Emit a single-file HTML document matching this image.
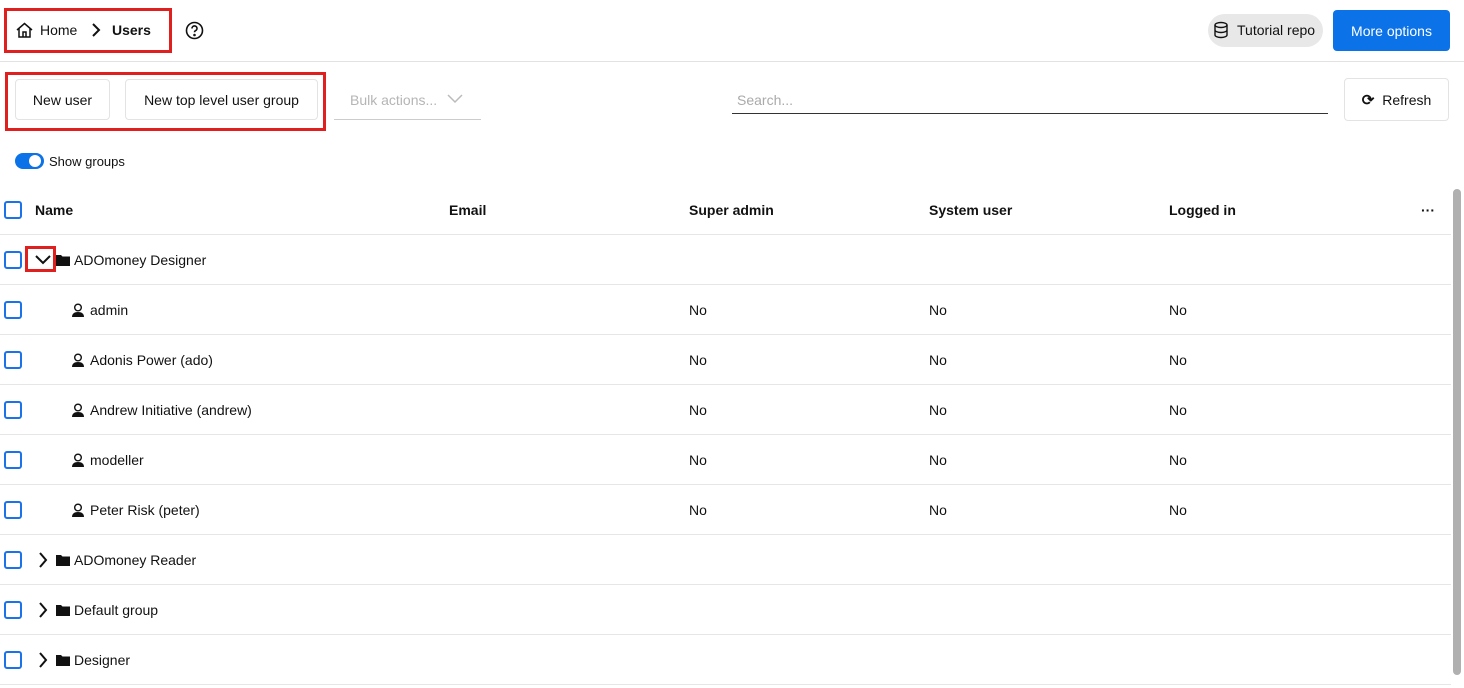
<!DOCTYPE html><html><head><style>
*{box-sizing:border-box;margin:0;padding:0}
body{width:1464px;height:688px;overflow:hidden;background:#fff;font-family:"Liberation Sans",Arial,sans-serif;font-size:14px;color:#111;position:relative}
.a{position:absolute}
.btn{position:absolute;border:1px solid #e3e3e3;border-radius:4px;background:#fff;font-size:14px;display:flex;align-items:center;justify-content:center}
.red{position:absolute;border:3px solid #e0201f}
.cb{position:absolute;left:4px;width:18px;height:18px;border:2px solid #1a73e8;border-radius:3px}
.row{position:absolute;left:0;width:1451px;height:50px;border-bottom:1px solid #e6e6e6}
.t{position:absolute;top:50%;transform:translateY(-50%);white-space:nowrap}
</style></head><body>
<div class="red" style="left:4px;top:8px;width:168px;height:45px"></div>
<svg class="a" style="left:16px;top:22px" width="17" height="16" viewBox="0 0 17 16" fill="none" stroke="#111" stroke-width="1.5"><path d="M1 8L8.5 1.5 16 8M3 6.5V15h11V6.5M7 15v-5h3v5"/></svg>
<div class="a" style="left:40px;top:22px;font-size:14px">Home</div>
<svg class="a" style="left:91px;top:23px" width="10" height="14" viewBox="0 0 10 14" fill="none" stroke="#111" stroke-width="2"><path d="M2 1l6 6-6 6"/></svg>
<div class="a" style="left:112px;top:22px;font-weight:bold">Users</div>
<svg class="a" style="left:185px;top:21px" width="19" height="19" viewBox="0 0 19 19" fill="none" stroke="#111" stroke-width="1.6"><circle cx="9.5" cy="9.5" r="8"/><path d="M7 7.5a2.5 2.5 0 1 1 3.5 2.2c-.8.4-1 .9-1 1.6"/><circle cx="9.5" cy="14" r=".5" fill="#111"/></svg>
<div class="a" style="left:1208px;top:14px;width:115px;height:33px;border-radius:17px;background:#e8e8e8"></div>
<svg class="a" style="left:1213px;top:21px" width="16" height="18" viewBox="0 0 16 18" fill="none" stroke="#111" stroke-width="1.4"><ellipse cx="8" cy="4" rx="6" ry="2.5"/><path d="M2 4v10c0 1.4 2.7 2.5 6 2.5s6-1.1 6-2.5V4M2 9c0 1.4 2.7 2.5 6 2.5S14 10.4 14 9"/></svg>
<div class="a" style="left:1237px;top:22px">Tutorial repo</div>
<div class="a" style="left:1333px;top:10px;width:117px;height:41px;border-radius:4px;background:#0b72e8;color:#fff;display:flex;align-items:center;justify-content:center">More options</div>
<div class="a" style="left:0;top:61px;width:1464px;height:1px;background:#e2e2e2"></div>
<div class="red" style="left:5px;top:72px;width:321px;height:59px"></div>
<div class="btn" style="left:15px;top:79px;width:95px;height:41px">New user</div>
<div class="btn" style="left:125px;top:79px;width:193px;height:41px">New top level user group</div>
<div class="a" style="left:334px;top:119px;width:147px;height:1px;background:#ccc"></div>
<div class="a" style="left:350px;top:92px;color:#b5b5b5">Bulk actions...</div>
<svg class="a" style="left:447px;top:94px" width="16" height="10" viewBox="0 0 16 10" fill="none" stroke="#bbb" stroke-width="1.5"><path d="M1 1l7 7 7-7"/></svg>
<div class="a" style="left:737px;top:92px;color:#aaa">Search...</div>
<div class="a" style="left:732px;top:113px;width:596px;height:1px;background:#333"></div>
<div class="btn" style="left:1344px;top:78px;width:105px;height:43px"><span style="font-size:15px;font-weight:bold;margin-right:8px">⟳</span>Refresh</div>
<div class="a" style="left:15px;top:153px;width:29px;height:16px;border-radius:8px;background:#0b72e8"></div>
<div class="a" style="left:29px;top:155px;width:12px;height:12px;border-radius:6px;background:#fff"></div>
<div class="a" style="left:49px;top:154px;font-size:13px">Show groups</div>
<div class="a" style="left:1453px;top:189px;width:8px;height:486px;border-radius:4px;background:#b0b0b0"></div>
<div class="row" style="top:185px"><div class="cb" style="top:16px"></div><div class="t" style="left:35px;font-weight:bold">Name</div><div class="t" style="left:449px;font-weight:bold">Email</div><div class="t" style="left:689px;font-weight:bold">Super admin</div><div class="t" style="left:929px;font-weight:bold">System user</div><div class="t" style="left:1169px;font-weight:bold">Logged in</div><div class="t" style="left:1421px;font-weight:bold">···</div></div>
<div class="red" style="left:25px;top:246px;width:31px;height:26px"></div>
<div id="rows"></div>
<script>
const folder='<svg class="t" style="left:56px" width="14" height="12" viewBox="0 0 14 12"><path d="M0 1h5l1.5 1.5H14V12H0z" fill="#111"/></svg>';
const user='<svg class="t" style="left:71px" width="14" height="14" viewBox="0 0 14 14"><circle cx="7" cy="4.5" r="3.3" fill="none" stroke="#111" stroke-width="1.4"/><path d="M1 14c0-3.5 2.5-5 6-5s6 1.5 6 5z" fill="#111"/></svg>';
const chev=(d)=>d?'<svg class="t" style="left:35px" width="16" height="10" viewBox="0 0 16 10" fill="none" stroke="#111" stroke-width="2"><path d="M1 1l7 7 7-7"/></svg>':'<svg class="t" style="left:38px" width="10" height="16" viewBox="0 0 10 16" fill="none" stroke="#111" stroke-width="2"><path d="M2 1l6 7-6 7"/></svg>';
const data=[['g','ADOmoney Designer',1],['u','admin'],['u','Adonis Power (ado)'],['u','Andrew Initiative (andrew)'],['u','modeller'],['u','Peter Risk (peter)'],['g','ADOmoney Reader'],['g','Default group'],['g','Designer']];
let h='';data.forEach((r,i)=>{const top=235+i*50;h+='<div class="row" style="top:'+top+'px"><div class="cb" style="top:16px"></div>';
if(r[0]=='g')h+=chev(r[2])+folder+'<div class="t" style="left:74px">'+r[1]+'</div>';
else h+=user+'<div class="t" style="left:90px">'+r[1]+'</div><div class="t" style="left:689px">No</div><div class="t" style="left:929px">No</div><div class="t" style="left:1169px">No</div>';
h+='</div>'});document.getElementById('rows').innerHTML=h;
</script>
</body></html>
